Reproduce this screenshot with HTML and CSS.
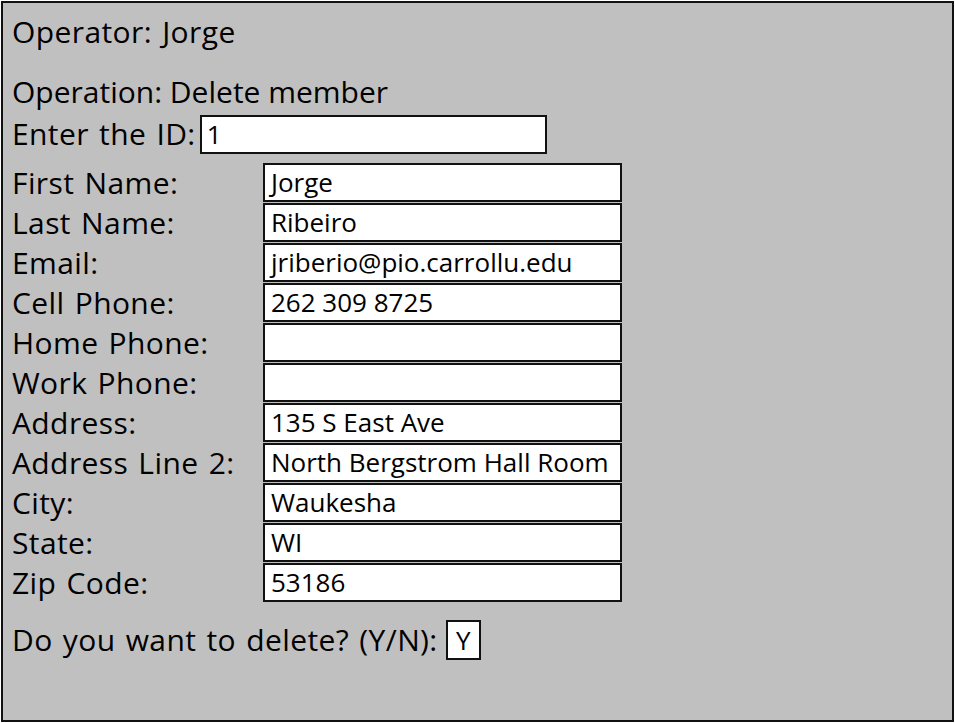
FILE: index.html
```html
<!DOCTYPE html>
<html>
<head>
<meta charset="utf-8">
<link rel="stylesheet" href="styles.css">
</head>
<body>
<div class="panel">
  <div class="line operator">Operator: Jorge</div>
  <div class="line operation">Operation: Delete member</div>
  <div class="idrow">
    <span class="label">Enter the ID:</span>
    <div class="box idbox">1</div>
  </div>
  <div class="form">
    <span class="label">First Name:</span><div class="box field">Jorge</div>
    <span class="label">Last Name:</span><div class="box field">Ribeiro</div>
    <span class="label">Email:</span><div class="box field">jriberio@pio.carrollu.edu</div>
    <span class="label">Cell Phone:</span><div class="box field">262 309 8725</div>
    <span class="label">Home Phone:</span><div class="box field"></div>
    <span class="label">Work Phone:</span><div class="box field"></div>
    <span class="label">Address:</span><div class="box field">135 S East Ave</div>
    <span class="label">Address Line 2:</span><div class="box field">North Bergstrom Hall Room</div>
    <span class="label">City:</span><div class="box field">Waukesha</div>
    <span class="label">State:</span><div class="box field">WI</div>
    <span class="label">Zip Code:</span><div class="box field">53186</div>
  </div>
  <div class="confirm">
    <span class="label">Do you want to delete? (Y/N):</span>
    <div class="box ybox">Y</div>
  </div>
</div>
</body>
</html>
```
FILE: styles.css
```css
* { box-sizing: border-box; }
html, body { margin: 0; padding: 0; background: #fff; }
body {
  font-family: "Open Sans", "DejaVu Sans", sans-serif;
  color: #000;
  padding: 1px;
}
.panel {
  width: 953px;
  height: 721px;
  border: 2px solid #111;
  background: #c0c0c0;
  padding: 9px 0 0 9px;
}
.label, .line {
  font-size: 30px;
  line-height: 40px;
  height: 40px;
  white-space: nowrap;
  letter-spacing: 0.4px;
  word-spacing: 2px;
}
.operation { margin-top: 20px; letter-spacing: 0; word-spacing: 0; }
.idrow {
  display: flex;
  align-items: center;
  height: 40px;
  margin-top: 2px;
  gap: 4px;
}
.box {
  background: #fff;
  border: 2px solid #111;
  font-size: 26px;
  padding: 0 0 0 6px;
  line-height: 35px;
  height: 39px;
  white-space: nowrap;
  overflow: hidden;
}
.idbox { width: 347px; padding-left: 5px; }
.form {
  display: grid;
  grid-template-columns: 251px 359px;
  grid-auto-rows: 40px;
  align-items: start;
  margin-top: 9px;
}
.field { width: 359px; }
.confirm {
  display: flex;
  align-items: center;
  height: 40px;
  margin-top: 17px;
  gap: 8px;
}
.ybox { width: 35px; height: 40px; padding: 0; text-align: center; line-height: 36px; }
```
